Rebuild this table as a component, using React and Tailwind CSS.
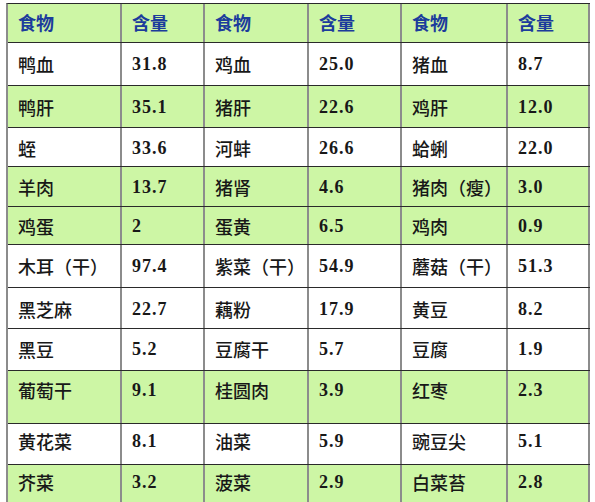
import React from 'react';

const widths = ['w-[114px]', 'w-[83px]', 'w-[104px]', 'w-[93px]', 'w-[106px]', 'w-[82px]'];

const rows = [
  { h: 'h-[43px]', pt: 'pt-[9px]', green: false, cells: ['鸭血', '31.8', '鸡血', '25.0', '猪血', '8.7'] },
  { h: 'h-[42px]', pt: 'pt-[9px]', green: true, cells: ['鸭肝', '35.1', '猪肝', '22.6', '鸡肝', '12.0'] },
  { h: 'h-[39px]', pt: 'pt-[8px]', green: false, cells: ['蛭', '33.6', '河蚌', '26.6', '蛤蜊', '22.0'] },
  { h: 'h-[40px]', pt: 'pt-[8px]', green: true, cells: ['羊肉', '13.7', '猪肾', '4.6', '猪肉（瘦）', '3.0'] },
  { h: 'h-[38px]', pt: 'pt-[7px]', green: true, cells: ['鸡蛋', '2', '蛋黄', '6.5', '鸡肉', '0.9'] },
  { h: 'h-[43px]', pt: 'pt-[9px]', green: false, cells: ['木耳（干）', '97.4', '紫菜（干）', '54.9', '蘑菇（干）', '51.3'] },
  { h: 'h-[41px]', pt: 'pt-[9px]', green: false, cells: ['黑芝麻', '22.7', '藕粉', '17.9', '黄豆', '8.2'] },
  { h: 'h-[42px]', pt: 'pt-[8px]', green: false, cells: ['黑豆', '5.2', '豆腐干', '5.7', '豆腐', '1.9'] },
  { h: 'h-[53px]', pt: 'pt-[7px]', green: true, cells: ['葡萄干', '9.1', '桂圆肉', '3.9', '红枣', '2.3'] },
  { h: 'h-[41px]', pt: 'pt-[5px]', green: false, cells: ['黄花菜', '8.1', '油菜', '5.9', '豌豆尖', '5.1'] },
  { h: 'h-[42px]', pt: 'pt-[5px]', green: true, cells: ['芥菜', '3.2', '菠菜', '2.9', '白菜苔', '2.8'] },
];

const cjk = { fontFamily: '"Noto Sans CJK SC", sans-serif' };
const num = { fontFamily: '"Liberation Serif", "Noto Sans CJK SC", serif' };

const App = () => {
  const header = ['食物', '含量', '食物', '含量', '食物', '含量'];
  return (
    <div className="w-[595px] h-[502px] bg-white overflow-hidden pt-[3px] pl-[6px]">
      <div className="w-[584px] border-l-2 border-l-[#8c8c8c] border-t border-t-[#2a2a2a]">
        <div className="flex h-[39px] bg-[#cdf6a5] border-b border-b-[#2a2a2a]">
          {header.map((t, i) => (
            <div
              key={i}
              className={`${widths[i]} shrink-0 border-r-2 border-r-[#8c8c8c] pl-[10px] pt-[6px] text-[18px] leading-[24px] font-bold text-[#1c3c9c]`}
              style={cjk}
            >
              {t}
            </div>
          ))}
        </div>
        {rows.map((r, ri) => (
          <div
            key={ri}
            className={`flex ${r.h} border-b border-b-[#2a2a2a] ${r.green ? 'bg-[#cdf6a5]' : 'bg-white'}`}
          >
            {r.cells.map((t, i) => (
              <div
                key={i}
                className={`${widths[i]} shrink-0 border-r-2 border-r-[#8c8c8c] pl-[10px] ${r.pt} text-[18px] leading-[24px] text-[#181818] ${i % 2 === 1 ? 'tracking-[1px] font-bold' : 'font-medium'}`}
                style={i % 2 === 1 ? num : cjk}
              >
                {t}
              </div>
            ))}
          </div>
        ))}
      </div>
    </div>
  );
};

export default App;
